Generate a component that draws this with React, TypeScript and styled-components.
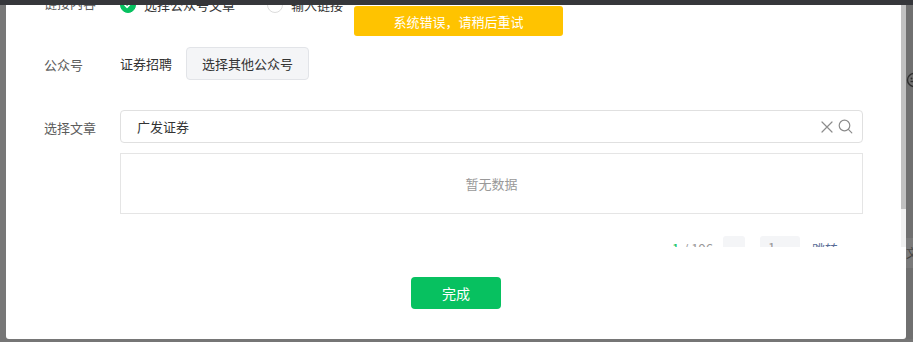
import React, { useLayoutEffect, useRef } from "react";
import styled, { createGlobalStyle } from "styled-components";

const GlobalStyle = createGlobalStyle`
  html, body { margin: 0; padding: 0; }
  body {
    background: #767676;
    font-family: "Noto Sans CJK SC", "Noto Sans", sans-serif;
    font-size: 13px;
    color: #333;
    overflow: hidden;
  }
  * { box-sizing: border-box; }
`;

const Screen = styled.div`
  position: relative;
  width: 913px;
  height: 342px;
  display: flex;
  flex-direction: column;
  overflow: hidden;
`;

const TopBar = styled.div`
  height: 5px;
  flex: none;
  background: #36373b;
`;

const Middle = styled.div`
  height: 334px;
  flex: none;
  display: flex;
`;

const LeftEdge = styled.div`
  width: 6px;
  flex: none;
  background: #777;
`;

const RightEdge = styled.div`
  flex: 1;
  background: #707070;
  display: flex;
  flex-direction: column;
  overflow: hidden;
  padding-top: 67px;
  color: #3a3a3a;
`;

const PageChar = styled.div`
  margin-top: 150px;
  height: 30px;
  background: #7a7a7a;
  font-size: 12px;
  line-height: 30px;
  white-space: nowrap;
  color: #444;
`;

const Modal = styled.div`
  width: 900px;
  flex: none;
  background: #fff;
  display: flex;
  flex-direction: column;
  border-radius: 0 0 3px 3px;
`;

const Body = styled.div`
  height: 242px;
  flex: none;
  display: flex;
`;

const Scroller = styled.div`
  flex: 1;
  overflow: hidden;
`;

const Track = styled.div`
  width: 5px;
  flex: none;
  background: #f1f1f1;
`;

const Thumb = styled.div`
  height: 204px;
  background: #c1c1c1;
`;

const Form = styled.div`
  padding: 10px 38px 12px 38px;
  display: flex;
  flex-direction: column;
`;

const Row = styled.div<{ $mb?: number }>`
  display: flex;
  align-items: flex-start;
  margin-bottom: ${(p) => p.$mb ?? 0}px;
`;

const Label = styled.div<{ $top: number }>`
  width: 76px;
  flex: none;
  line-height: 20px;
  margin-top: ${(p) => p.$top}px;
  color: #5c5c5c;
`;

const Field = styled.div`
  flex: 1;
  display: flex;
  align-items: center;
  min-height: 20px;
`;

const FieldColumn = styled.div`
  flex: 1;
  display: flex;
  flex-direction: column;
`;

const RadioOption = styled.label`
  display: flex;
  align-items: center;
  gap: 8px;
  margin-right: 32px;
  line-height: 20px;
  color: #333;
`;

const RadioDot = styled.span<{ $checked?: boolean }>`
  width: 16px;
  height: 16px;
  border-radius: 50%;
  flex: none;
  display: flex;
  align-items: center;
  justify-content: center;
  background: ${(p) => (p.$checked ? "#07c160" : "#fff")};
  border: 1px solid ${(p) => (p.$checked ? "#07c160" : "#dcdcdc")};
`;

const AccountName = styled.span`
  color: #333;
  margin-right: 14px;
  line-height: 20px;
`;

const GrayButton = styled.button`
  height: 33px;
  padding: 0 15px;
  border: 1px solid #e2e4e8;
  border-radius: 4px;
  background: #f4f5f7;
  color: #333;
  font-family: inherit;
  font-size: 13px;
  cursor: pointer;
`;

const SearchBox = styled.div`
  height: 33px;
  border: 1px solid #e0e0e0;
  border-radius: 4px;
  display: flex;
  align-items: center;
  padding: 0 9px 0 16px;
`;

const SearchText = styled.span`
  flex: 1;
  color: #333;
`;

const IconSlot = styled.span`
  display: flex;
  align-items: center;
  margin-left: 5px;
`;

const EmptyBox = styled.div`
  margin-top: 10px;
  height: 61px;
  border: 1px solid #e5e5e5;
  display: flex;
  align-items: center;
  justify-content: center;
  color: #999;
`;

const Pager = styled.div`
  margin-top: 22px;
  height: 24px;
  display: flex;
  align-items: center;
  justify-content: flex-end;
  padding-right: 25px;
  color: #999;
`;

const PageCurrent = styled.span`
  color: #07c160;
`;

const PageTotal = styled.span`
  margin-left: 4px;
  margin-right: 10px;
`;

const PageNav = styled.span`
  width: 22px;
  height: 24px;
  border-radius: 3px;
  background: #f4f5f7;
  display: flex;
  align-items: center;
  justify-content: center;
  margin-right: 15px;
  color: #888;
`;

const JumpInput = styled.span`
  width: 40px;
  height: 24px;
  border-radius: 3px;
  background: #f4f5f7;
  padding-left: 8px;
  line-height: 24px;
  color: #999;
  margin-right: 12px;
`;

const JumpLink = styled.span`
  color: #576b95;
`;

const Footer = styled.div`
  flex: 1;
  display: flex;
  justify-content: center;
  padding-top: 30px;
`;

const PrimaryButton = styled.button`
  width: 90px;
  height: 32px;
  border: none;
  border-radius: 4px;
  background: #07c160;
  color: #fff;
  font-family: inherit;
  font-size: 14px;
  cursor: pointer;
`;

const Toast = styled.div`
  position: absolute;
  top: 6px;
  left: 354px;
  width: 209px;
  height: 30px;
  border-radius: 3px;
  background: #ffc300;
  color: #fff;
  font-size: 13px;
  display: flex;
  align-items: center;
  justify-content: center;
`;

const CheckMark = () => (
  <svg width="10" height="10" viewBox="0 0 10 10" fill="none">
    <path d="M2 5.2 L4.2 7.3 L8.2 2.8" stroke="#fff" strokeWidth="1.6" strokeLinecap="round" strokeLinejoin="round" />
  </svg>
);

const ClearIcon = () => (
  <svg width="12" height="12" viewBox="0 0 12 12" fill="none">
    <path d="M1 1 L11 11 M11 1 L1 11" stroke="#8c8c8c" strokeWidth="1.2" strokeLinecap="round" />
  </svg>
);

const SearchIcon = () => (
  <svg width="15" height="15" viewBox="0 0 15 15" fill="none">
    <circle cx="6.5" cy="6.5" r="5.3" stroke="#8c8c8c" strokeWidth="1.2" />
    <path d="M10.4 10.4 L13.8 13.8" stroke="#8c8c8c" strokeWidth="1.2" strokeLinecap="round" />
  </svg>
);

const FaceIcon = () => (
  <svg width="16" height="16" viewBox="0 0 16 16" fill="none">
    <circle cx="8" cy="8" r="6.5" stroke="#2f2f2f" strokeWidth="1.4" />
    <circle cx="5.5" cy="6.5" r="1" fill="#2f2f2f" />
    <circle cx="10.5" cy="6.5" r="1" fill="#2f2f2f" />
    <path d="M4.5 9.5 H11.5" stroke="#2f2f2f" strokeWidth="1.4" />
  </svg>
);

export default function App() {
  const scrollRef = useRef<HTMLDivElement>(null);

  useLayoutEffect(() => {
    if (scrollRef.current) scrollRef.current.scrollTop = 20;
  }, []);

  return (
    <>
      <GlobalStyle />
      <Screen>
        <TopBar />
        <Middle>
          <LeftEdge />
          <Modal>
            <Body>
              <Scroller ref={scrollRef}>
                <Form>
                  <Row $mb={32}>
                    <Label $top={-2}>链接内容</Label>
                    <Field>
                      <RadioOption>
                        <RadioDot $checked>
                          <CheckMark />
                        </RadioDot>
                        选择公众号文章
                      </RadioOption>
                      <RadioOption>
                        <RadioDot />
                        输入链接
                      </RadioOption>
                    </Field>
                  </Row>
                  <Row $mb={30}>
                    <Label $top={8}>公众号</Label>
                    <Field>
                      <AccountName>证券招聘</AccountName>
                      <GrayButton>选择其他公众号</GrayButton>
                    </Field>
                  </Row>
                  <Row>
                    <Label $top={8}>选择文章</Label>
                    <FieldColumn>
                      <SearchBox>
                        <SearchText>广发证券</SearchText>
                        <IconSlot>
                          <ClearIcon />
                        </IconSlot>
                        <IconSlot>
                          <SearchIcon />
                        </IconSlot>
                      </SearchBox>
                      <EmptyBox>暂无数据</EmptyBox>
                      <Pager>
                        <PageCurrent>1</PageCurrent>
                        <PageTotal>/ 196</PageTotal>
                        <PageNav>›</PageNav>
                        <JumpInput>1</JumpInput>
                        <JumpLink>跳转</JumpLink>
                      </Pager>
                    </FieldColumn>
                  </Row>
                </Form>
              </Scroller>
              <Track>
                <Thumb />
              </Track>
            </Body>
            <Footer>
              <PrimaryButton>完成</PrimaryButton>
            </Footer>
          </Modal>
          <RightEdge>
            <FaceIcon />
            <PageChar>文</PageChar>
          </RightEdge>
        </Middle>
        <Toast>系统错误，请稍后重试</Toast>
      </Screen>
    </>
  );
}
